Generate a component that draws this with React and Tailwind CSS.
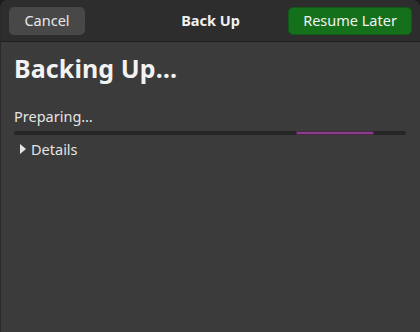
export default function App() {
  const font = { fontFamily: '"Noto Sans", "Open Sans", sans-serif' };
  return (
    <div className="w-[420px] h-[332px] bg-[#1c1c1c] overflow-hidden" style={font}>
      <div className="h-full flex flex-col rounded-t-[8px] overflow-hidden border-l border-[#2a2a2a] bg-[#3b3b3b]">
        {/* Header bar */}
        <div className="h-[42px] grid grid-cols-[1fr_auto_1fr] items-center px-[8px] bg-[#2d2d2d] border-b border-[#1e1e1e]">
          <div className="flex justify-start">
            <button className="w-[76px] h-[28px] rounded-[5px] bg-[#484848] text-[#e8e8e8] text-[14.5px]">
              Cancel
            </button>
          </div>
          <span className="text-[14.5px] font-bold text-[#f0f0f0]">Back Up</span>
          <div className="flex justify-end">
            <button className="w-[124px] h-[28px] rounded-[5px] bg-[#15701b] text-[#f2f2f2] text-[14.5px] border border-[#0f5a14]">
              Resume Later
            </button>
          </div>
        </div>
        {/* Body */}
        <div className="flex-1 px-[13px] pt-[8px]">
          <h1 className="text-[25px] font-bold text-[#f2f2f2] leading-[36px] tracking-[0.1px]">Backing Up…</h1>
          <p className="mt-[20px] text-[14.5px] text-[#e4e4e4] leading-[20px]">Preparing…</p>
          <div className="mt-[5px] w-[392px] h-[4px] rounded-full bg-[#262626] relative">
            <div className="absolute left-[282px] top-0 w-[78px] h-[4px] bg-[#8a3e8a] border border-[#4a254a]" />
          </div>
          <div className="mt-[4px] flex items-center gap-[5px] pl-[6px] text-[14.5px] text-[#e4e4e4] leading-[20px]">
            <svg width="6" height="10" viewBox="0 0 6 10">
              <path d="M0 0 L6 5 L0 10 Z" fill="#e4e4e4" />
            </svg>
            <span>Details</span>
          </div>
        </div>
      </div>
    </div>
  );
}
